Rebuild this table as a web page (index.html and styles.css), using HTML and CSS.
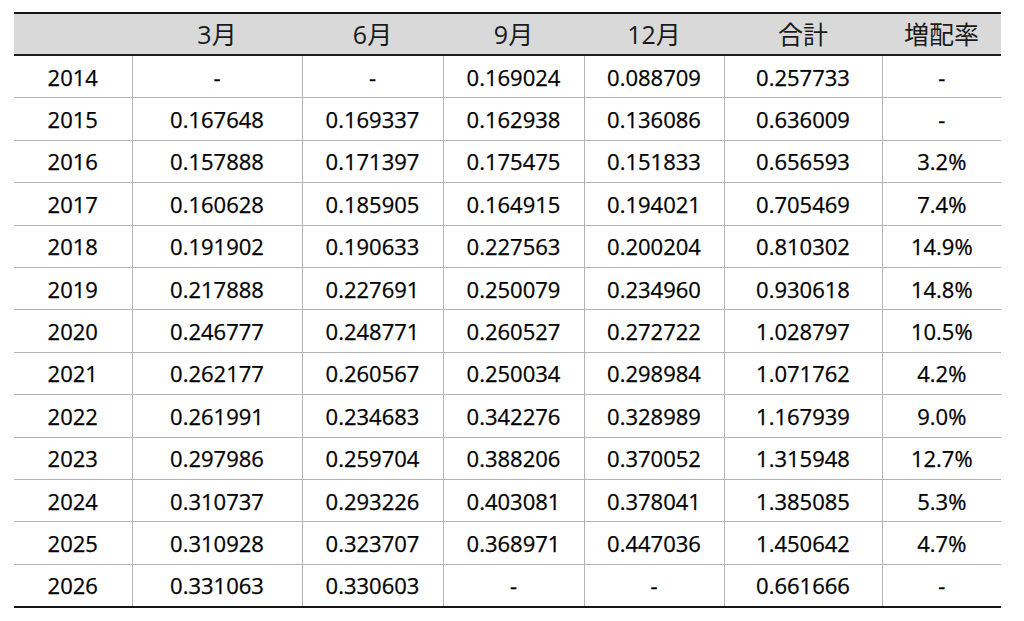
FILE: index.html
```html
<!DOCTYPE html>
<html lang="ja">
<head>
<meta charset="utf-8">
<title>配当</title>
<link rel="stylesheet" href="styles.css">
</head>
<body>
<table class="div-table">
  <colgroup>
    <col class="c-year"><col class="c-m3"><col class="c-m6"><col class="c-m9"><col class="c-m12"><col class="c-sum"><col class="c-rate">
  </colgroup>
  <thead>
    <tr><th></th><th>3月</th><th>6月</th><th>9月</th><th>12月</th><th>合計</th><th>増配率</th></tr>
  </thead>
  <tbody>
    <tr><td>2014</td><td>-</td><td>-</td><td>0.169024</td><td>0.088709</td><td>0.257733</td><td>-</td></tr>
    <tr><td>2015</td><td>0.167648</td><td>0.169337</td><td>0.162938</td><td>0.136086</td><td>0.636009</td><td>-</td></tr>
    <tr><td>2016</td><td>0.157888</td><td>0.171397</td><td>0.175475</td><td>0.151833</td><td>0.656593</td><td>3.2%</td></tr>
    <tr><td>2017</td><td>0.160628</td><td>0.185905</td><td>0.164915</td><td>0.194021</td><td>0.705469</td><td>7.4%</td></tr>
    <tr><td>2018</td><td>0.191902</td><td>0.190633</td><td>0.227563</td><td>0.200204</td><td>0.810302</td><td>14.9%</td></tr>
    <tr><td>2019</td><td>0.217888</td><td>0.227691</td><td>0.250079</td><td>0.234960</td><td>0.930618</td><td>14.8%</td></tr>
    <tr><td>2020</td><td>0.246777</td><td>0.248771</td><td>0.260527</td><td>0.272722</td><td>1.028797</td><td>10.5%</td></tr>
    <tr><td>2021</td><td>0.262177</td><td>0.260567</td><td>0.250034</td><td>0.298984</td><td>1.071762</td><td>4.2%</td></tr>
    <tr><td>2022</td><td>0.261991</td><td>0.234683</td><td>0.342276</td><td>0.328989</td><td>1.167939</td><td>9.0%</td></tr>
    <tr><td>2023</td><td>0.297986</td><td>0.259704</td><td>0.388206</td><td>0.370052</td><td>1.315948</td><td>12.7%</td></tr>
    <tr><td>2024</td><td>0.310737</td><td>0.293226</td><td>0.403081</td><td>0.378041</td><td>1.385085</td><td>5.3%</td></tr>
    <tr><td>2025</td><td>0.310928</td><td>0.323707</td><td>0.368971</td><td>0.447036</td><td>1.450642</td><td>4.7%</td></tr>
    <tr><td>2026</td><td>0.331063</td><td>0.330603</td><td>-</td><td>-</td><td>0.661666</td><td>-</td></tr>
  </tbody>
</table>
</body>
</html>
```
FILE: styles.css
```css
html, body {
  margin: 0;
  padding: 0;
  background: #ffffff;
}

body {
  padding: 12px 0 0 14px;
  font-family: "Open Sans", "Noto Sans CJK JP", sans-serif;
  color: #000000;
}

.div-table {
  border-collapse: collapse;
  table-layout: fixed;
  width: 987px;
  font-size: 22px;
  border-top: 2.5px solid #151515;
  border-bottom: 2.5px solid #151515;
}

.c-year { width: 118px; }
.c-m3 { width: 170px; }
.c-m6 { width: 141px; }
.c-m9 { width: 141px; }
.c-m12 { width: 140px; }
.c-sum { width: 158px; }
.c-rate { width: 119px; }

.div-table th {
  background: #d9d9d9;
  font-weight: normal;
  font-size: 25px;
  height: 38px;
  padding: 0 0 2px;
  text-align: center;
  border-bottom: 2px solid #1e1e1e;
  color: #1a1a1a;
}

.div-table td {
  height: 41.4px;
  padding: 0;
  text-align: center;
  border-top: 1.5px solid #b3b3b3;
  border-left: 1.5px solid #b3b3b3;
  -webkit-text-stroke: 0.25px #000000;
}

.div-table td:first-child {
  border-left: none;
}

.div-table tbody tr:first-child td {
  border-top: none;
}
```
